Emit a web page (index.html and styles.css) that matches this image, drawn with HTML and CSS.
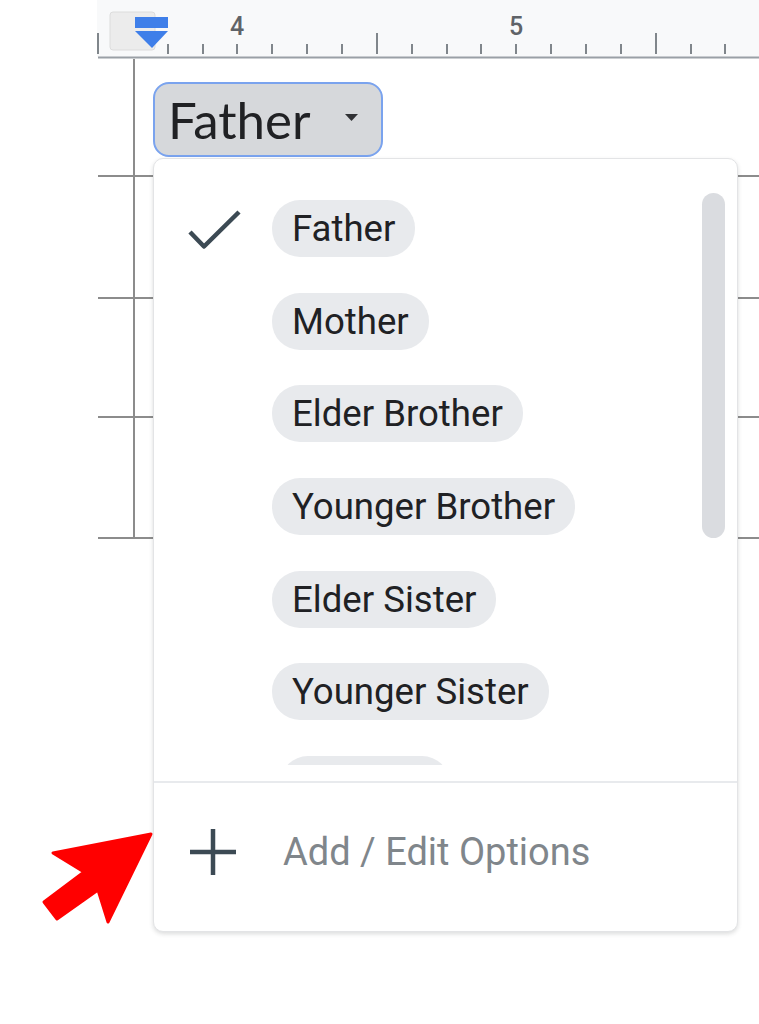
FILE: index.html
```html
<!DOCTYPE html>
<html>
<head>
<meta charset="utf-8">
<link rel="stylesheet" href="styles.css">
</head>
<body>
<div class="page">
  <div class="ruler">
    <svg class="ruler-svg" width="759" height="59" viewBox="0 0 759 59">
      <rect x="97" y="0" width="662" height="57" fill="#f8f9fa"/>
      <g stroke="#80868b" stroke-width="2">
        <line x1="98" y1="33" x2="98" y2="54"/>
        <line x1="168" y1="44" x2="168" y2="54"/>
        <line x1="203" y1="44" x2="203" y2="54"/>
        <line x1="237" y1="44" x2="237" y2="54"/>
        <line x1="272" y1="44" x2="272" y2="54"/>
        <line x1="307" y1="44" x2="307" y2="54"/>
        <line x1="342" y1="44" x2="342" y2="54"/>
        <line x1="377" y1="33" x2="377" y2="54"/>
        <line x1="412" y1="44" x2="412" y2="54"/>
        <line x1="447" y1="44" x2="447" y2="54"/>
        <line x1="481" y1="44" x2="481" y2="54"/>
        <line x1="516" y1="44" x2="516" y2="54"/>
        <line x1="551" y1="44" x2="551" y2="54"/>
        <line x1="586" y1="44" x2="586" y2="54"/>
        <line x1="621" y1="44" x2="621" y2="54"/>
        <line x1="656" y1="33" x2="656" y2="54"/>
        <line x1="691" y1="44" x2="691" y2="54"/>
        <line x1="725" y1="44" x2="725" y2="54"/>
      </g>
      <line x1="98" y1="57.5" x2="759" y2="57.5" stroke="#9aa0a6" stroke-width="2"/>
      <text x="237" y="35" class="ruler-num" text-anchor="middle">4</text>
      <text x="516" y="35" class="ruler-num" text-anchor="middle">5</text>
      <rect x="110" y="12" width="45" height="38" rx="3" fill="#ececec" stroke="#dcdcdc" stroke-width="1"/>
      <rect x="135" y="17" width="33" height="11" fill="#3f7fe9"/>
      <polygon points="135,31 168,31 152,48" fill="#3f7fe9"/>
    </svg>
  </div>

  <div class="table">
    <div class="row row1">
      <div class="gutter"></div>
      <div class="cell">
        <div class="select-chip">
          <span class="select-label">Father</span>
          <svg class="caret" width="13" height="8" viewBox="0 0 13 8"><polygon points="0,0 13,0 6.5,7" fill="#303134"/></svg>
        </div>
      </div>
    </div>
    <div class="row row2"><div class="gutter"></div><div class="cell"></div></div>
    <div class="row row3"><div class="gutter"></div><div class="cell"></div></div>
    <div class="row row4"><div class="gutter"></div><div class="cell"></div></div>
  </div>

  <div class="menu">
    <div class="menu-list">
      <div class="item">
        <span class="item-icon">
          <svg width="119" height="57" viewBox="0 0 119 57"><polyline points="36,32 50,46.5 85,12" fill="none" stroke="#3c4a54" stroke-width="4.5" stroke-linejoin="round"/></svg>
        </span>
        <span class="chip">Father</span>
      </div>
      <div class="item"><span class="item-icon"></span><span class="chip">Mother</span></div>
      <div class="item"><span class="item-icon"></span><span class="chip">Elder Brother</span></div>
      <div class="item"><span class="item-icon"></span><span class="chip">Younger Brother</span></div>
      <div class="item"><span class="item-icon"></span><span class="chip">Elder Sister</span></div>
      <div class="item"><span class="item-icon"></span><span class="chip">Younger Sister</span></div>
      <div class="item"><span class="item-icon"></span><span class="chip chip-empty"></span></div>
      <div class="scrollbar"></div>
    </div>
    <div class="menu-footer">
      <svg class="plus" width="48" height="48" viewBox="0 0 48 48"><path d="M24 1 V47 M1 24 H47" stroke="#3c4a54" stroke-width="4.5" fill="none"/></svg>
      <span class="footer-label">Add / Edit Options</span>
    </div>
  </div>

  <svg class="pointer" width="130" height="110" viewBox="30 820 130 110">
    <polygon points="151,834 53,853 84,872 44,902 57,919 98,890 108,922" fill="#ff0000" stroke="#ff0000" stroke-width="3" stroke-linejoin="round"/>
  </svg>
</div>
</body>
</html>
```

FILE: styles.css
```css
html, body {
  margin: 0;
  padding: 0;
  background: #ffffff;
}

.page {
  position: relative;
  width: 759px;
  height: 1024px;
  overflow: hidden;
  background: #ffffff;
  font-family: Roboto, "Liberation Sans", sans-serif;
}

.ruler {
  height: 59px;
}

.ruler-svg {
  display: block;
}

.ruler-num {
  font-family: Roboto, "Liberation Sans", sans-serif;
  font-size: 25px;
  font-weight: 500;
  fill: #5f6368;
}

.table {
  margin-left: 98px;
  display: flex;
  flex-direction: column;
}

.row {
  display: flex;
  border-bottom: 2px solid #8c8c8c;
}

.row1 { height: 116px; }
.row2 { height: 120px; }
.row3 { height: 117px; }
.row4 { height: 119px; }

.gutter {
  width: 35px;
  border-right: 2px solid #8c8c8c;
}

.cell {
  flex: 1;
  padding: 23px 0 0 18px;
}

.select-chip {
  box-sizing: border-box;
  width: 230px;
  height: 75px;
  border: 2px solid #7aa3ee;
  border-radius: 16px;
  background: #d6d8db;
  display: flex;
  align-items: center;
  padding-left: 13px;
}

.select-label {
  font-family: Lato, "Liberation Sans", sans-serif;
  font-size: 51px;
  color: #202124;
  line-height: 1;
  width: 177px;
}

.caret {
  display: block;
  margin-top: -3px;
}

.menu {
  position: absolute;
  left: 153px;
  top: 158px;
  width: 585px;
  height: 774px;
  box-sizing: border-box;
  border: 1px solid #e3e4e6;
  border-radius: 10px;
  background: #ffffff;
  box-shadow: 0 2px 4px rgba(60, 64, 67, 0.18);
  display: flex;
  flex-direction: column;
}

.menu-list {
  position: relative;
  height: 606px;
  margin-bottom: 16px;
  overflow: hidden;
  padding-top: 41px;
  box-sizing: border-box;
  display: flex;
  flex-direction: column;
  gap: 35.7px;
}

.item {
  display: flex;
  align-items: center;
  height: 57px;
  flex: none;
}

.item-icon {
  width: 118px;
  height: 57px;
  flex: none;
}

.item-icon svg {
  display: block;
}

.chip {
  height: 57px;
  line-height: 57px;
  padding: 0 20px 0 20px;
  border-radius: 28px;
  background: #e8eaed;
  font-size: 36.6px;
  color: #202124;
  white-space: nowrap;
}

.chip-empty {
  box-sizing: border-box;
  width: 170px;
  margin-left: 8px;
}

.scrollbar {
  position: absolute;
  left: 548px;
  top: 34px;
  width: 23px;
  height: 345px;
  border-radius: 12px;
  background: #dadce0;
}

.menu-footer {
  border-top: 2px solid #e8eaed;
  flex: 1;
  display: flex;
  align-items: center;
  padding: 0 0 10px 35px;
}

.plus {
  display: block;
  flex: none;
}

.footer-label {
  margin-left: 46px;
  font-size: 38px;
  color: #80868b;
  white-space: nowrap;
}

.pointer {
  position: absolute;
  left: 30px;
  top: 820px;
}
```
